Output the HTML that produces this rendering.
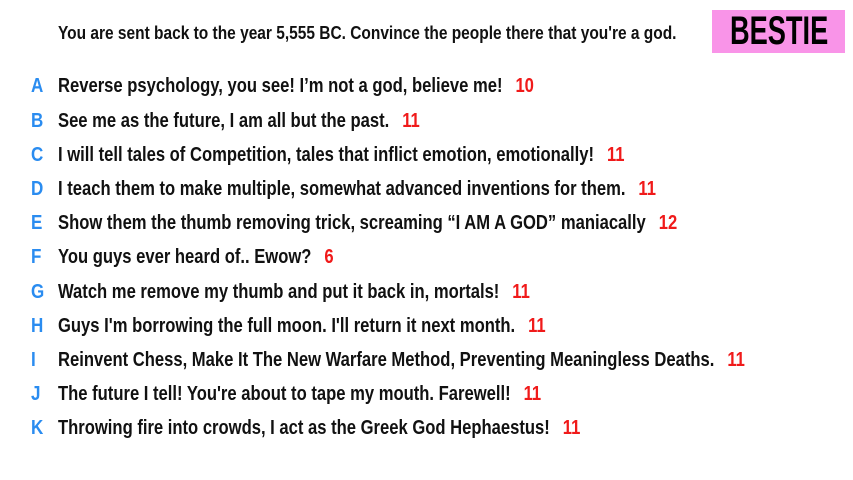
<!DOCTYPE html>
<html><head><style>
body{margin:0;width:853px;height:480px;background:#fff;overflow:hidden;position:relative;font-family:"Liberation Sans",sans-serif;font-weight:bold;}
.h{position:absolute;left:58px;top:23px;font-size:18px;color:#111;white-space:nowrap;transform:scaleX(0.86);transform-origin:0 0}
.b{position:absolute;left:712px;top:10px;width:133px;height:43px;background:#f994e8;}
.b span{position:absolute;left:18px;top:0;font-size:40px;line-height:43px;color:#000;transform:scaleX(0.68);transform-origin:0 0;white-space:nowrap}
.r{position:absolute;left:0;height:30px;font-size:20.5px;line-height:30px;white-space:nowrap;color:#111;font-weight:bold}
.r .l{position:absolute;left:31px;color:#2a8cf0;transform:scaleX(0.83);transform-origin:0 0}
.r .t{position:absolute;left:58px;transform:scaleX(0.81);transform-origin:0 0}
.r .n{color:#f01a1a;margin-left:16px}
</style></head><body>
<div class="h">You are sent back to the year 5,555 BC. Convince the people there that you're a god.</div>
<div class="b"><span>BESTIE</span></div>
<div class="r" style="top:71px"><span class="l">A</span><span class="t">Reverse psychology, you see! I’m not a god, believe me!<span class="n">10</span></span></div>
<div class="r" style="top:106px"><span class="l">B</span><span class="t">See me as the future, I am all but the past.<span class="n">11</span></span></div>
<div class="r" style="top:140px"><span class="l">C</span><span class="t">I will tell tales of Competition, tales that inflict emotion, emotionally!<span class="n">11</span></span></div>
<div class="r" style="top:174px"><span class="l">D</span><span class="t">I teach them to make multiple, somewhat advanced inventions for them.<span class="n">11</span></span></div>
<div class="r" style="top:208px"><span class="l">E</span><span class="t">Show them the thumb removing trick, screaming “I AM A GOD” maniacally<span class="n">12</span></span></div>
<div class="r" style="top:242px"><span class="l">F</span><span class="t">You guys ever heard of.. Ewow?<span class="n">6</span></span></div>
<div class="r" style="top:277px"><span class="l">G</span><span class="t">Watch me remove my thumb and put it back in, mortals!<span class="n">11</span></span></div>
<div class="r" style="top:311px"><span class="l">H</span><span class="t">Guys I'm borrowing the full moon. I'll return it next month.<span class="n">11</span></span></div>
<div class="r" style="top:345px"><span class="l">I</span><span class="t">Reinvent Chess, Make It The New Warfare Method, Preventing Meaningless Deaths.<span class="n">11</span></span></div>
<div class="r" style="top:379px"><span class="l">J</span><span class="t">The future I tell! You're about to tape my mouth. Farewell!<span class="n">11</span></span></div>
<div class="r" style="top:413px"><span class="l">K</span><span class="t">Throwing fire into crowds, I act as the Greek God Hephaestus!<span class="n">11</span></span></div>
</body></html>
